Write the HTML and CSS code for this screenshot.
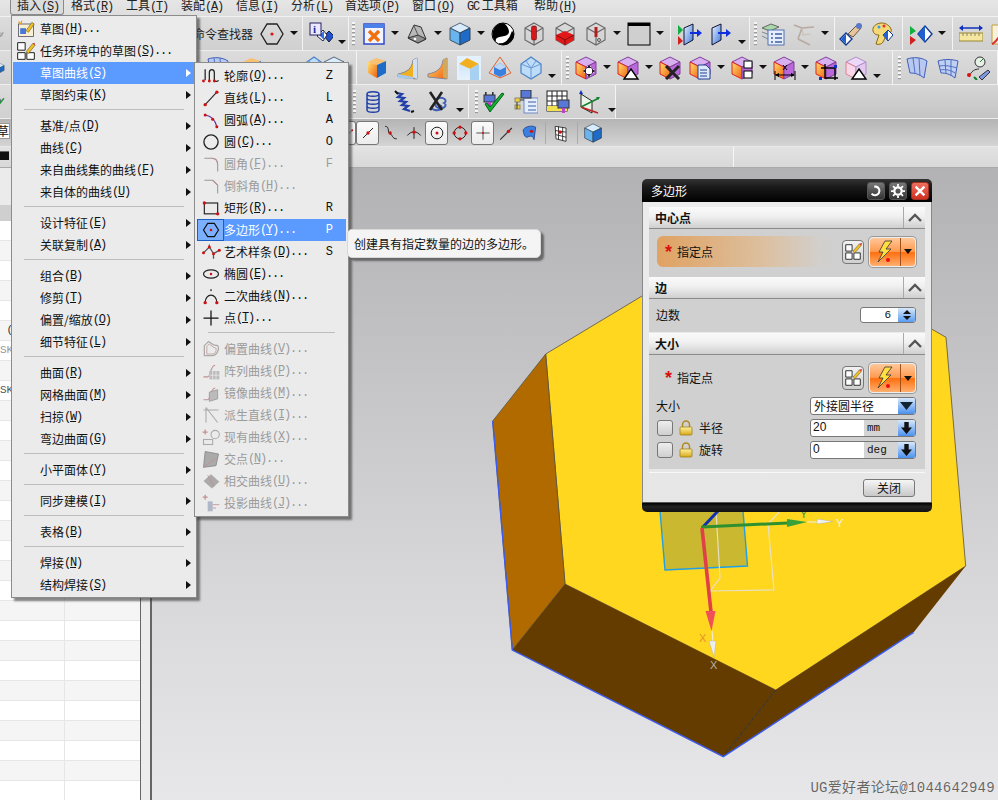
FILE: index.html
```html
<!DOCTYPE html>
<html lang="zh-CN">
<head>
<meta charset="utf-8">
<title>多边形</title>
<link rel="stylesheet" href="styles.css">
</head>
<body>
<svg class="defs" width="0" height="0" aria-hidden="true">
  <defs>
    <linearGradient id="gBlue" x1="0" y1="0" x2="1" y2="1"><stop offset="0" stop-color="#e8f2ff"/><stop offset="1" stop-color="#3f78d8"/></linearGradient>
    <linearGradient id="gOr" x1="0" y1="0" x2="1" y2="1"><stop offset="0" stop-color="#ffe070"/><stop offset="1" stop-color="#f06010"/></linearGradient>
    <linearGradient id="gSide" x1="0" y1="0" x2="0" y2="1"><stop offset="0" stop-color="#cfe6fa"/><stop offset="1" stop-color="#e8f2fb"/></linearGradient>
    <linearGradient id="gLock" x1="0" y1="0" x2="0" y2="1"><stop offset="0" stop-color="#fff2a0"/><stop offset="1" stop-color="#d8a818"/></linearGradient>
    <symbol id="chain" viewBox="0 0 24 24"><path d="M2 20L12 8M8 22l12-14" fill="none" stroke="#999" stroke-width="3"/><circle cx="14" cy="14" r="4" fill="none" stroke="#aaa" stroke-width="2"/></symbol>
    <symbol id="hexf" viewBox="0 0 24 24"><path d="M7 2h10l6 10-6 10H7L1 12z" fill="none" stroke="#222" stroke-width="1.3"/><circle cx="12" cy="12" r="1.6" fill="#e01010"/></symbol>
    <symbol id="info" viewBox="0 0 24 24"><path d="M15 14l5-5 5 5-5 6z" fill="#2050d0" stroke="#123"/><path d="M14 8l4 5-4 6-6-5z" fill="#fff" stroke="#224"/><path d="M10 13l5-4v9z" fill="#3a70e0"/><rect x="1" y="1" width="11" height="12" fill="#ece8ff" stroke="#222060"/><text x="4" y="11" class="svgt">i</text></symbol>
    <symbol id="win" viewBox="0 0 24 24"><rect x="2" y="2" width="20" height="20" fill="#f2f4ff" stroke="#3048c8" stroke-width="1.5"/><rect x="2" y="2" width="20" height="4" fill="#4a80e8"/><path d="M7 9l10 10M17 9L7 19" stroke="#f07010" stroke-width="3.4"/></symbol>
    <symbol id="part" viewBox="0 0 24 24"><path d="M3 16L9 3l7 2 5 12-8 4z" fill="#b8b8b8" stroke="#333"/><path d="M3 16l10 5 8-4-8-4z" fill="#8f8f8f" stroke="#333"/><circle cx="10" cy="17" r="1.3" fill="#fff"/><path d="M9 4l4 9" stroke="#555"/></symbol>
    <symbol id="cube" viewBox="0 0 24 24"><path d="M12 1l10 5-10 5L2 6z" fill="#d8ecfb" stroke="#567"/><path d="M2 6l10 5v12L2 18z" fill="#68b4ee" stroke="#456"/><path d="M22 6l-10 5v12l10-5z" fill="#1f6cc8" stroke="#345"/></symbol>
    <symbol id="yin" viewBox="0 0 24 24"><circle cx="12" cy="12" r="11" fill="#fff" stroke="#000"/><path d="M12 1a11 11 0 0 0-7 19c-2-8 12-3 13-10 0-4-3-8-6-9z" fill="#000"/><path d="M23 12c0 6-5 11-11 11-2 0-4-1-5-2 5 1 8-1 10-4 2-2 3-6 4-8 1 1 2 2 2 3z" fill="#000"/></symbol>
    <symbol id="wire" viewBox="0 0 24 24"><path d="M12 1l9 5v12l-9 5-9-5V6zM3 6l9 5 9-5M12 11v12" fill="none" stroke="#666" stroke-width="1.1"/></symbol>
    <symbol id="wcyl" viewBox="0 0 24 24"><use href="#wire"/><rect x="9.5" y="4" width="5" height="14" rx="1.5" fill="#d81818" stroke="#601010" stroke-width=".6"/></symbol>
    <symbol id="wfill" viewBox="0 0 24 24"><use href="#wire"/><path d="M3 13l9-4 9 4v5l-9 5-9-5z" fill="#e01818"/><path d="M3 13l9 5 9-5M12 18v5" stroke="#801010" fill="none"/></symbol>
    <symbol id="wneedle" viewBox="0 0 24 24"><use href="#wire"/><path d="M12 5v10" stroke="#b02020" stroke-width="3"/><circle cx="15" cy="18" r="1.5" fill="none" stroke="#555"/></symbol>
    <symbol id="frame" viewBox="0 0 24 24"><rect x="1" y="1" width="22" height="22" fill="#cfcfcf" stroke="#000"/><rect x="1" y="1" width="22" height="3" fill="#000"/></symbol>
    <symbol id="plane2" viewBox="0 0 24 24"><path d="M6 6l9-4v16l-9 5z" fill="url(#gBlue)" stroke="#113"/><path d="M12 11h10" stroke="#1030e0" stroke-width="2"/><path d="M19 7l5 4-5 4z" fill="#1030e0"/><path d="M0 3l5 5-5 5z" fill="#10b040"/><path d="M0 14l5 5-5 4z" fill="#d02020"/></symbol>
    <symbol id="plane1" viewBox="0 0 24 24"><path d="M3 6l9-4v16l-9 5z" fill="url(#gBlue)" stroke="#113"/><path d="M9 11h11" stroke="#1030e0" stroke-width="2"/><path d="M17 7l5 4-5 4z" fill="#1030e0"/></symbol>
    <symbol id="layers" viewBox="0 0 24 24"><path d="M1 6l9-4 8 3-9 4z" fill="#a8d8a8" stroke="#666"/><path d="M1 10l8 3 9-4M1 14l6 3" fill="none" stroke="#789"/><rect x="7" y="8" width="16" height="15" fill="#e4eefc" stroke="#5570b0"/><path d="M10 12h2M14 12h7M10 16h2M14 16h7M10 20h2M14 20h7" stroke="#4060a0" stroke-width="1.4"/></symbol>
    <symbol id="axes" viewBox="0 0 24 24"><path d="M6 17l4-11 12-1M6 17l12 6M10 6L2 3" fill="none" stroke="#b8aaa0" stroke-width="1.6"/><path d="M10 6l1 7M10 13l9-1" stroke="#c8c0b8" fill="none"/></symbol>
    <symbol id="hand" viewBox="0 0 24 24"><path d="M9 12l9-9 4 3-8 9z" fill="#e8c49a" stroke="#654"/><circle cx="20" cy="4" r="3" fill="#5878c8"/><path d="M1 17l6-6 6 6-6 6z" fill="#fff" stroke="#113a90" stroke-width="1.4"/><path d="M7 12v10l-5-5z" fill="#2060d0"/></symbol>
    <symbol id="palette" viewBox="0 0 24 24"><path d="M12 1C6 1 2 5 3 9c1 4 5 4 6 4l-3 9c3 1 6 0 7-2l3-6c4-2 6-4 5-7-1-3-5-6-9-6z" fill="#f5d878" stroke="#8a6a10"/><circle cx="9" cy="5" r="1.5" fill="#30a0e8"/><circle cx="14" cy="4" r="1.5" fill="#e83030"/><path d="M13 13l5-5 5 5-5 6z" fill="#fff" stroke="#113a90"/><path d="M18 8v11l-5-6z" fill="#2060d0"/></symbol>
    <symbol id="dia" viewBox="0 0 24 24"><path d="M9 12l7-8 7 8-7 8z" fill="#fff" stroke="#123a90" stroke-width="1.4"/><path d="M16 4v16l-7-8z" fill="#2060d0"/><path d="M1 4l6 5-6 4z" fill="#10b040"/><path d="M1 14l6 4-6 5z" fill="#d02020"/></symbol>
    <symbol id="ruler" viewBox="0 0 24 24"><rect x="0" y="11" width="24" height="8" fill="#f5e6a0" stroke="#998830"/><path d="M4 11v3M8 11v3M12 11v3M16 11v3M20 11v3" stroke="#886"/><path d="M1 6h22" stroke="#1030c0" stroke-width="1.5"/><path d="M0 6l4-3v6zM24 6l-4-3v6z" fill="#1030c0"/></symbol>
    <symbol id="graph" viewBox="0 0 24 24"><path d="M2 22V3l20 0v19z" fill="#f8f0d8" stroke="#c0a040"/><path d="M2 22C8 20 10 8 22 6" stroke="#d83030" fill="none" stroke-width="2"/></symbol>
    <symbol id="ocube" viewBox="0 0 24 24"><path d="M4 6l8-4 10 3-9 4z" fill="#f8c070"/><path d="M4 6l9 3v13l-9-5z" fill="url(#gOr)"/><path d="M22 5l-9 4v13l9-5z" fill="#1f6cc8"/></symbol>
    <symbol id="bend1" viewBox="0 0 24 24"><path d="M3 21L22 23V2l-4 2c-1 8-5 12-15 14z" fill="#f0b020" stroke="#889"/><path d="M18 4l4-2v21l-4-2z" fill="#cfe0f5"/><path d="M3 18l15 3v2L3 22z" fill="#a8c8ec"/></symbol>
    <symbol id="bend2" viewBox="0 0 24 24"><path d="M2 21L21 23V2l-4 2c-1 8-5 12-15 14z" fill="url(#gOr)" stroke="#889"/><path d="M17 4l4-2v21l-4-2z" fill="#d0a860"/></symbol>
    <symbol id="boxy" viewBox="0 0 24 24"><rect x="0" y="0" width="24" height="24" fill="#e4f2ff"/><path d="M2 8l8-6 12 6-9 5z" fill="#f2b020"/><path d="M2 8l11 5v11H2z" fill="url(#gSide)"/><path d="M22 8l-9 5v11h9z" fill="#a8d0f0"/></symbol>
    <symbol id="gemc" viewBox="0 0 24 24"><path d="M1 17L12 1l11 16-11 5z" fill="none" stroke="#e06030"/><path d="M12 7l6 4v7l-6 3-6-3v-7z" fill="#3a80e0"/><path d="M12 7l6 4-6 3-6-3z" fill="#bcd8f8"/></symbol>
    <symbol id="gem" viewBox="0 0 24 24"><path d="M12 1l10 7v9l-10 6L2 17V8z" fill="#bcdcf8" stroke="#4a80c8" stroke-width="1.2"/><path d="M7 5l5 7 5-7M2 8l10 4 10-4M12 12v11" fill="none" stroke="#6a9ad8"/></symbol>
    <symbol id="pcube" viewBox="0 0 24 24"><path d="M12 1l10 5-10 5L2 6z" fill="#d8b0f0" stroke="#804098"/><path d="M2 6l10 5v12L2 18z" fill="url(#gOr)" stroke="#e02020"/><path d="M22 6l-10 5v12l10-5z" fill="#b868d8" stroke="#804098"/></symbol>
    <symbol id="ov-move" viewBox="0 0 24 24"><path d="M15 10v10M10 15h10" stroke="#fff" stroke-width="4"/><path d="M15 9l2.5 3h-5zM15 21l2.5-3h-5zM9 15l3-2.500v5zM21 15l-3-2.500v5z" fill="#222"/></symbol>
    <symbol id="ov-tri" viewBox="0 0 24 24"><path d="M15 13l7 10H8z" fill="#fff" stroke="#000" stroke-width="1.4"/></symbol>
    <symbol id="ov-x" viewBox="0 0 24 24"><path d="M8 10l13 13M21 10L8 23" stroke="#222" stroke-width="3"/></symbol>
    <symbol id="ov-doc" viewBox="0 0 24 24"><path d="M10 9h8l4 4v10H10z" fill="#dde8fa" stroke="#204090"/><path d="M12 14h7M12 17h7M12 20h7" stroke="#204090"/></symbol>
    <symbol id="ov-two" viewBox="0 0 24 24"><rect x="14" y="5" width="8" height="7" fill="#fff" stroke="#000"/><rect x="14" y="15" width="8" height="7" fill="#fff" stroke="#000"/></symbol>
    <symbol id="ov-dim" viewBox="0 0 24 24"><path d="M3 15v9M23 15v9M4 19h18" stroke="#000"/><path d="M3 19l4-2v4zM23 19l-4-2v4z" fill="#000"/><path d="M11 9l4 5M15 9l-4 5" stroke="#000"/></symbol>
    <symbol id="ov-crop" viewBox="0 0 24 24"><path d="M11 8v14h13M7 12h14v12" fill="none" stroke="#000" stroke-width="1.4"/><rect x="5" y="21" width="3" height="3" fill="#1030c0"/><rect x="20" y="9" width="3" height="3" fill="#1030c0"/></symbol>
    <symbol id="pcubeghost" viewBox="0 0 24 24"><path d="M12 1l10 5-10 5L2 6z" fill="#ecd8f8" stroke="#b090c8"/><path d="M2 6l10 5v12L2 18z" fill="#f8d8e8" stroke="#e08090"/><path d="M22 6l-10 5v12l10-5z" fill="#e4c8f0" stroke="#b090c8"/></symbol>
    <symbol id="surf1" viewBox="0 0 24 24"><path d="M2 3c6-2 14-2 20 2l-3 17c-5-4-9-5-14-5z" fill="#b8c8f0" stroke="#4060b8"/><path d="M8 2l2 15M14 2l1 18" stroke="#5070c0" fill="none"/></symbol>
    <symbol id="surf2" viewBox="0 0 24 24"><path d="M2 5c6-2 14-2 20 0l-3 17c-5-4-9-5-14-5z" fill="#c0d0f4" stroke="#4060b8"/><path d="M9 4l1 14M15 4l0 16M3 10c6-1 12 0 18 2M4 14c6-1 10 0 15 3" stroke="#5070c0" fill="none"/></symbol>
    <symbol id="scan" viewBox="0 0 24 24"><circle cx="13" cy="6" r="5" fill="#e8f0e8" stroke="#333"/><path d="M13 6l3-3" stroke="#208030"/><path d="M2 21c2-6 6-8 10-8" fill="none" stroke="#333"/><circle cx="2" cy="19" r="2" fill="#e01010"/><path d="M12 21l9-7 2 2-8 8z" fill="#8098e0" stroke="#334"/><path d="M7 21l3 3" stroke="#108030" stroke-width="2"/></symbol>
    <symbol id="coil" viewBox="0 0 24 24"><path d="M6 4c0-3 12-3 12 0M6 4c0 3 12 3 12 0M6 8c0 3 12 3 12 0M6 12c0 3 12 3 12 0M6 16c0 3 12 3 12 0M6 20c0 3 12 3 12 0M6 4v16M18 4v16" fill="none" stroke="#2040a8" stroke-width="1.5"/></symbol>
    <symbol id="spring" viewBox="0 0 24 24"><path d="M5 3l5 1-4 3 6 1-4 3 6 1-4 3 6 1-4 3 6 2" fill="none" stroke="#2040a8" stroke-width="2.200"/><path d="M3 1l3 3M19 22l3-1" stroke="#111" stroke-width="2"/></symbol>
    <symbol id="nocoil" viewBox="0 0 24 24"><path d="M9 14a5 3 0 1 0 8-1a5 3 0 1 0 -8-1M5 16a5 3 0 1 0 8-1" fill="none" stroke="#4060b8" stroke-width="2"/><path d="M3 2l12 18M15 2L3 20" stroke="#222" stroke-width="2.600"/></symbol>
    <symbol id="plug" viewBox="0 0 24 24"><rect x="3" y="2" width="1.600" height="4" fill="#333"/><rect x="10" y="2" width="1.600" height="4" fill="#333"/><rect x="2" y="5" width="11" height="7" fill="#5878d8" stroke="#333"/><rect x="6" y="12" width="3" height="4" fill="#c040d0"/></symbol>
    <symbol id="check" viewBox="0 0 24 24"><use href="#plug"/><path d="M3 14l5 8L22 4l-2-1L8 17l-3-4z" fill="#10b030" stroke="#086018"/></symbol>
    <symbol id="tree" viewBox="0 0 24 24"><rect x="10" y="8" width="14" height="15" fill="#e4eefc" stroke="#7088c0"/><path d="M14 12h8M14 16h8M14 20h8" stroke="#4060a0"/><rect x="1" y="8" width="5" height="4" fill="#f0d040" stroke="#886"/><rect x="1" y="15" width="5" height="4" fill="#f0d040" stroke="#886"/><rect x="7" y="0" width="10" height="8" fill="#5878d8" stroke="#333"/><path d="M3 12v7M6 10h4" stroke="#333"/></symbol>
    <symbol id="table" viewBox="0 0 24 24"><rect x="1" y="1" width="20" height="20" fill="#fff" stroke="#222"/><path d="M1 6h20M1 11h20M1 16h20M6 1v20M11 1v20M16 1v20" stroke="#222"/><rect x="1" y="16" width="20" height="5" fill="#f0e050"/><rect x="12" y="10" width="11" height="8" fill="#5878d8" stroke="#333"/><rect x="16" y="18" width="3" height="5" fill="#c040d0"/></symbol>
    <symbol id="csys" viewBox="0 0 24 24"><path d="M3 4v13l11 6V11z" fill="#e8f4e8" stroke="#222"/><path d="M3 17l18-9" stroke="#108030" stroke-width="1.500"/><path d="M22 7l-4 0 2 3z" fill="#108030"/><path d="M3 17l17 6" stroke="#c02020" stroke-width="1.500"/><path d="M3 0l-2 4h4z" fill="#1030c0"/></symbol>
    <symbol id="s-line" viewBox="0 0 24 24"><path d="M6 18L18 6" stroke="#222" stroke-width="1.200"/><circle cx="12" cy="12" r="2" fill="#d01010"/></symbol>
    <symbol id="s-end" viewBox="0 0 24 24"><path d="M6 18L18 6" stroke="#222" stroke-width="1.200"/><circle cx="18" cy="6" r="2" fill="#d01010"/></symbol>
    <symbol id="s-wave" viewBox="0 0 24 24"><path d="M5 4c6 0 2 8 6 9 3 1 2 6 8 6" fill="none" stroke="#222" stroke-width="1.200"/><circle cx="11" cy="12" r="2" fill="#d01010"/></symbol>
    <symbol id="s-perp" viewBox="0 0 24 24"><path d="M4 15c5-6 11-6 16 0M12 5v14" fill="none" stroke="#222" stroke-width="1.200"/><circle cx="12" cy="11" r="2" fill="#d01010"/></symbol>
    <symbol id="s-center" viewBox="0 0 24 24"><circle cx="12" cy="12" r="7" fill="none" stroke="#222" stroke-width="1.200"/><circle cx="12" cy="12" r="1.800" fill="#d01010"/></symbol>
    <symbol id="s-quad" viewBox="0 0 24 24"><circle cx="12" cy="12" r="7" fill="none" stroke="#222" stroke-width="1.200"/><circle cx="12" cy="5" r="2" fill="#d01010"/><circle cx="5" cy="12" r="2" fill="#d01010"/><circle cx="19" cy="12" r="2" fill="#d01010"/><circle cx="12" cy="19" r="2" fill="#d01010"/></symbol>
    <symbol id="s-cross" viewBox="0 0 24 24"><path d="M12 4v16M4 12h16" stroke="#555" stroke-width="1.200"/><circle cx="12" cy="12" r="1.200" fill="#d01010"/></symbol>
    <symbol id="s-obl" viewBox="0 0 24 24"><path d="M5 20L19 6" stroke="#333" stroke-width="1.400"/><circle cx="15" cy="10" r="2" fill="#d01010"/></symbol>
    <symbol id="s-face" viewBox="0 0 24 24"><path d="M5 8c4-5 12-5 15-3l-2 15c-1-5-4-5-8-3-3 1-5-5-5-9z" fill="#3a80e0" stroke="#204090"/><circle cx="15" cy="10" r="2" fill="#d01010"/></symbol>
    <symbol id="s-grid" viewBox="0 0 24 24"><path d="M5 4l13 2v16L6 19z" fill="#fff" stroke="#222"/><path d="M5 9l13 2M6 14l12 3M9 4v16M14 5v16" stroke="#222"/><circle cx="11" cy="11" r="2" fill="#d01010"/></symbol>
    <symbol id="m-sk" viewBox="0 0 24 24"><rect x="3" y="6" width="18" height="15" fill="#f8f0d0" stroke="#556"/><path d="M5 11h7v7H5z" fill="#4a78d8"/><path d="M12 14l7-10 3 2-7 10z" fill="#f0c020" stroke="#444" stroke-width=".6"/><path d="M3 3l3 3M7 2l-1 4" stroke="#f0a010" stroke-width="1.400"/></symbol>
    <symbol id="m-task" viewBox="0 0 24 24"><path d="M2 2h9v9H2zM2 14h9v8H2zM13 14h9v8h-9z" fill="#fff" stroke="#222" stroke-width="1.200"/><path d="M12 13l8-10 3 2-8 10z" fill="#f0c020" stroke="#444" stroke-width=".6"/><path d="M20 3l3 2-1-3z" fill="#e02020"/></symbol>
    <symbol id="m-profile" viewBox="0 0 24 24"><path d="M5 4v13M5 17h0M10 17V8c0-5 6-5 6 0v9c0 2 4 2 5 0" fill="none" stroke="#222" stroke-width="1.500"/><circle cx="3" cy="18" r="1.700" fill="#d01010"/><circle cx="10" cy="18" r="1.700" fill="#d01010"/><circle cx="16" cy="18" r="1.700" fill="#d01010"/></symbol>
    <symbol id="m-line" viewBox="0 0 24 24"><path d="M5 20L19 5" stroke="#222" stroke-width="1.300"/><circle cx="5" cy="20" r="2" fill="#d01010"/><circle cx="19" cy="5" r="2" fill="#d01010"/></symbol>
    <symbol id="m-arc" viewBox="0 0 24 24"><path d="M5 6c7 1 12 6 14 14" fill="none" stroke="#6030a0" stroke-width="1.500"/><circle cx="5" cy="6" r="1.800" fill="#d01010"/><circle cx="14" cy="11" r="1.800" fill="#d01010"/><circle cx="19" cy="20" r="1.800" fill="#d01010"/></symbol>
    <symbol id="m-circle" viewBox="0 0 24 24"><circle cx="12" cy="12" r="8.500" fill="none" stroke="#222" stroke-width="1.600"/></symbol>
    <symbol id="m-fillet" viewBox="0 0 24 24"><path d="M4 5h9c5 0 7 3 7 8v8" fill="none" stroke="#999" stroke-width="1.300"/><path d="M13 5c5 0 7 3 7 8" fill="none" stroke="#c09090" stroke-width="1.300"/></symbol>
    <symbol id="m-chamfer" viewBox="0 0 24 24"><path d="M4 5h10l6 6v10" fill="none" stroke="#999" stroke-width="1.300"/><path d="M14 5l6 6" stroke="#c09090" stroke-width="1.300"/></symbol>
    <symbol id="m-rect" viewBox="0 0 24 24"><rect x="4" y="6" width="16" height="13" fill="none" stroke="#222" stroke-width="1.400"/><circle cx="4" cy="6" r="2" fill="#d01010"/><circle cx="20" cy="19" r="2" fill="#d01010"/></symbol>
    <symbol id="m-poly" viewBox="0 0 24 24"><path d="M8 4h8l5 8-5 8H8l-5-8z" fill="none" stroke="#111" stroke-width="1.400"/><circle cx="12" cy="12" r="1.600" fill="#d01010"/></symbol>
    <symbol id="m-spline" viewBox="0 0 24 24"><path d="M3 13l7-7 5 8 7-4M10 6v-3M15 14v6" fill="none" stroke="#555" stroke-width="1.500"/><circle cx="3" cy="13" r="1.800" fill="#d01010"/><circle cx="10" cy="6" r="1.800" fill="#d01010"/><circle cx="15" cy="14" r="1.800" fill="#d01010"/><circle cx="22" cy="10" r="1.800" fill="#d01010"/></symbol>
    <symbol id="m-ellipse" viewBox="0 0 24 24"><ellipse cx="12" cy="12" rx="9" ry="5" fill="none" stroke="#222" stroke-width="1.400"/><circle cx="12" cy="12" r="1.500" fill="#d01010"/></symbol>
    <symbol id="m-conic" viewBox="0 0 24 24"><path d="M5 20c0-12 14-12 14 0" fill="none" stroke="#222" stroke-width="1.500"/><circle cx="5" cy="20" r="2" fill="#d01010"/><circle cx="19" cy="20" r="2" fill="#d01010"/><circle cx="12" cy="5" r="1.300" fill="#666"/></symbol>
    <symbol id="m-point" viewBox="0 0 24 24"><path d="M12 3v18M3 12h18" stroke="#111" stroke-width="1.500"/></symbol>
    <symbol id="d-offset" viewBox="0 0 24 24"><path d="M4 20V8l5-5 6 4 5 1c3 5-2 12-6 12z" fill="none" stroke="#aaa" stroke-width="1.500"/><path d="M7 18V9l3-3 5 4 3 1c1 3-1 7-4 7z" fill="none" stroke="#c8a8a8" stroke-width="1.200"/></symbol>
    <symbol id="d-pattern" viewBox="0 0 24 24"><path d="M3 19h5c4 0 3-14 9-14" fill="none" stroke="#c09090" stroke-width="1.300"/><rect x="10" y="12" width="12" height="10" fill="#bbb"/><path d="M14 12v10M18 12v10M10 17h12" stroke="#e8e8e8"/></symbol>
    <symbol id="d-mirror" viewBox="0 0 24 24"><path d="M3 20h5c4 0 3-14 9-14" fill="none" stroke="#c09090" stroke-width="1.300"/><path d="M10 11l10-3v11l-10 3z" fill="#bbb" stroke="#999"/></symbol>
    <symbol id="d-derived" viewBox="0 0 24 24"><path d="M3 6h18M6 3l14 18M6 3v18" stroke="#aaa" stroke-width="1.300"/></symbol>
    <symbol id="d-exist" viewBox="0 0 24 24"><path d="M5 3v6M2 6h6" stroke="#c09090" stroke-width="1.500"/><circle cx="17" cy="9" r="5" fill="none" stroke="#aaa" stroke-width="1.300"/><rect x="3" y="15" width="11" height="6" fill="none" stroke="#aaa" stroke-width="1.300"/></symbol>
    <symbol id="d-inter" viewBox="0 0 24 24"><path d="M5 3l16 3-3 14-15 2z" fill="#aaa" stroke="#888"/><path d="M3 22l14-10" stroke="#c09090"/></symbol>
    <symbol id="d-curve" viewBox="0 0 24 24"><path d="M3 12l9-8 10 9-9 8z" fill="#aaa"/><path d="M8 5l8 14" stroke="#c09090"/></symbol>
    <symbol id="d-proj" viewBox="0 0 24 24"><path d="M5 2v6M2 5h6" stroke="#c09090" stroke-width="1.500"/><path d="M8 10h6v12H8z" fill="#b0b8c8"/><path d="M14 14h8M14 18h4" stroke="#c09090"/></symbol>
    <symbol id="sketchbtn" viewBox="0 0 22 22"><path d="M3 3h7v7H3zM3 12h7v7H3zM12 12h7v7h-7z" fill="#fff" stroke="#222"/><path d="M11 10l7-8 2 2-7 8z" fill="#f0c020" stroke="#444" stroke-width=".5"/><path d="M18 2l2 2 1-3z" fill="#e02020"/></symbol>
    <symbol id="bolt" viewBox="0 0 24 24"><path d="M12 1h7l-6 8h5L5 22l5-10H6z" fill="#ffe040" stroke="#333" stroke-width=".8"/><circle cx="15" cy="20" r="2" fill="#e81010"/></symbol>
    <symbol id="lock" viewBox="0 0 14 16"><path d="M3.500 7V4.500a3.500 3.500 0 0 1 7 0V7" fill="none" stroke="#b08a20" stroke-width="1.500"/><rect x="1" y="7" width="12" height="8" rx="1" fill="url(#gLock)" stroke="#a08018" stroke-width=".8"/></symbol>
    <symbol id="chev" viewBox="0 0 14 10"><path d="M1 8l6-6 6 6" fill="none" stroke="#555" stroke-width="2.400"/></symbol>
  </defs>
</svg>

<div class="app">
  <nav class="menubar">
    <span class="mb on">插入<span class="k">(<u>S</u>)</span></span>
    <span class="mb">格式<span class="k">(<u>R</u>)</span></span>
    <span class="mb">工具<span class="k">(<u>T</u>)</span></span>
    <span class="mb">装配<span class="k">(<u>A</u>)</span></span>
    <span class="mb">信息<span class="k">(<u>I</u>)</span></span>
    <span class="mb">分析<span class="k">(<u>L</u>)</span></span>
    <span class="mb wide">首选项<span class="k">(<u>P</u>)</span></span>
    <span class="mb">窗口<span class="k">(<u>O</u>)</span></span>
    <span class="mb wide"><span class="k">GC</span> 工具箱</span>
    <span class="mb">帮助<span class="k">(<u>H</u>)</span></span>
  </nav>

  <div class="tb r1">
    <div class="grp ga">
      <i class="b lead"><svg class="ic"><use href="#chain"/></svg></i>
      <span class="finder">命令查找器</span>
      <i class="hexb"><svg class="ic"><use href="#hexf"/></svg></i><i class="a"></i>
    </div>
    <div class="grp gb"><i class="b"><svg class="ic"><use href="#info"/></svg></i><i class="a low"></i></div>
    <div class="grp gc"><i class="grip"></i>
      <i class="b"><svg class="ic"><use href="#win"/></svg></i><i class="a"></i>
      <i class="b"><svg class="ic"><use href="#part"/></svg></i><i class="a"></i>
      <i class="b"><svg class="ic"><use href="#cube"/></svg></i><i class="a"></i>
      <i class="b"><svg class="ic"><use href="#yin"/></svg></i>
      <i class="b"><svg class="ic"><use href="#wcyl"/></svg></i>
      <i class="b"><svg class="ic"><use href="#wfill"/></svg></i>
      <i class="b"><svg class="ic"><use href="#wneedle"/></svg></i><i class="a"></i>
      <i class="b"><svg class="ic"><use href="#frame"/></svg></i><i class="a"></i>
    </div>
    <div class="grp gd">
      <i class="b"><svg class="ic"><use href="#plane2"/></svg></i>
      <i class="b"><svg class="ic"><use href="#plane1"/></svg></i><i class="a low"></i>
    </div>
    <div class="grp ge"><i class="grip"></i>
      <i class="b"><svg class="ic"><use href="#layers"/></svg></i>
      <i class="b"><svg class="ic"><use href="#axes"/></svg></i><i class="a"></i>
    </div>
    <div class="grp gf">
      <i class="b"><svg class="ic"><use href="#hand"/></svg></i>
      <i class="b"><svg class="ic"><use href="#palette"/></svg></i>
    </div>
    <div class="grp gg"><i class="b"><svg class="ic"><use href="#dia"/></svg></i><i class="a"></i></div>
    <div class="grp gh">
      <i class="b"><svg class="ic"><use href="#ruler"/></svg></i>
      <i class="b"><svg class="ic"><use href="#graph"/></svg></i>
    </div>
  </div>

  <div class="tb r2">
    <div class="grp ra">
      <i class="b lead"><svg class="ic"><use href="#cube"/></svg></i>
      <i class="b peek1"><svg class="ic"><use href="#surf1"/></svg></i>
      <i class="b peek2"><svg class="ic"><use href="#ocube"/></svg></i>
      <i class="b peek3"><svg class="ic"><use href="#gem"/></svg></i>
      <i class="b peek4"><svg class="ic"><use href="#cube"/></svg></i>
    </div>
    <div class="grp rb">
      <i class="b"><svg class="ic"><use href="#ocube"/></svg></i>
      <i class="b"><svg class="ic"><use href="#bend1"/></svg></i>
      <i class="b"><svg class="ic"><use href="#bend2"/></svg></i>
      <i class="b"><svg class="ic"><use href="#boxy"/></svg></i>
      <i class="b"><svg class="ic"><use href="#gemc"/></svg></i>
      <i class="b"><svg class="ic"><use href="#gem"/></svg></i><i class="a low"></i>
    </div>
    <div class="grp rc"><i class="grip"></i>
      <i class="b"><svg class="ic"><use href="#pcube"/><use href="#ov-move"/></svg></i><i class="a"></i>
      <i class="b"><svg class="ic"><use href="#pcube"/><use href="#ov-tri"/></svg></i><i class="a"></i>
      <i class="b"><svg class="ic"><use href="#pcube"/><use href="#ov-x"/></svg></i>
      <i class="b"><svg class="ic"><use href="#pcube"/><use href="#ov-doc"/></svg></i><i class="a"></i>
      <i class="b"><svg class="ic"><use href="#pcube"/><use href="#ov-two"/></svg></i><i class="a"></i>
      <i class="b"><svg class="ic"><use href="#pcube"/><use href="#ov-dim"/></svg></i><i class="a"></i>
      <i class="b"><svg class="ic"><use href="#pcube"/><use href="#ov-crop"/></svg></i>
      <i class="b"><svg class="ic"><use href="#pcubeghost"/><use href="#ov-tri"/></svg></i><i class="a low"></i>
    </div>
    <div class="grp rd"><i class="grip"></i>
      <i class="b"><svg class="ic"><use href="#surf1"/></svg></i>
      <i class="b"><svg class="ic"><use href="#surf2"/></svg></i>
      <i class="b"><svg class="ic"><use href="#scan"/></svg></i>
    </div>
  </div>

  <div class="tb r3">
    <div class="grp t1"><i class="b lead"><svg class="ic"><use href="#check"/></svg></i></div>
    <div class="grp t2"><i class="grip"></i>
      <i class="b"><svg class="ic"><use href="#coil"/></svg></i>
      <i class="b"><svg class="ic"><use href="#spring"/></svg></i>
      <i class="b nudge"><svg class="ic"><use href="#nocoil"/></svg></i><i class="a low"></i>
    </div>
    <div class="grp t3"><i class="grip"></i>
      <i class="b"><svg class="ic"><use href="#check"/></svg></i>
      <i class="b"><svg class="ic"><use href="#tree"/></svg></i>
      <i class="b"><svg class="ic"><use href="#table"/></svg></i>
      <i class="b"><svg class="ic"><use href="#csys"/></svg></i><i class="a low"></i>
    </div>
  </div>

  <div class="tb r4">
    <span class="combo">草图</span>
    <div class="snaps">
      <i class="s on"><svg class="ic20"><use href="#s-end"/></svg></i>
      <i class="s on"><svg class="ic20"><use href="#s-line"/></svg></i>
      <i class="s"><svg class="ic20"><use href="#s-wave"/></svg></i>
      <i class="s"><svg class="ic20"><use href="#s-perp"/></svg></i>
      <i class="s on"><svg class="ic20"><use href="#s-center"/></svg></i>
      <i class="s"><svg class="ic20"><use href="#s-quad"/></svg></i>
      <i class="s on"><svg class="ic20"><use href="#s-cross"/></svg></i>
      <i class="s"><svg class="ic20"><use href="#s-obl"/></svg></i>
      <i class="s"><svg class="ic20"><use href="#s-face"/></svg></i>
      <i class="vs"></i>
      <i class="s"><svg class="ic20"><use href="#s-grid"/></svg></i>
      <i class="vs"></i>
      <i class="s"><svg class="ic20"><use href="#cube"/></svg></i>
    </div>
  </div>

  <div class="tb r5"><i class="handle"></i><span class="cut"></span></div>

  <main class="work">
    <aside class="side">
      <div class="side-top"></div>
      <div class="side-head"></div>
      <div class="rows">
        <div class="row"><b></b><b></b></div><div class="row"><b></b><b></b></div>
        <div class="row"><b></b><b></b></div><div class="row"><b></b><b></b></div>
        <div class="row"><b></b><b></b></div><div class="row"><b>&nbsp;(</b><b></b></div>
        <div class="row"><b class="mut">SK</b><b></b></div><div class="row"><b></b><b></b></div>
        <div class="row"><b class="dk">SK</b><b></b></div><div class="row"><b></b><b></b></div>
        <div class="row"><b></b><b></b></div><div class="row"><b></b><b></b></div>
        <div class="row"><b></b><b></b></div><div class="row"><b></b><b></b></div>
        <div class="row"><b></b><b></b></div><div class="row"><b></b><b></b></div>
        <div class="row"><b></b><b></b></div><div class="row"><b></b><b></b></div>
        <div class="row"><b></b><b></b></div><div class="row"><b></b><b></b></div>
        <div class="row"><b></b><b></b></div><div class="row"><b></b><b></b></div>
        <div class="row"><b></b><b></b></div><div class="row"><b></b><b></b></div>
        <div class="row"><b></b><b></b></div><div class="row"><b></b><b></b></div>
        <div class="row"><b></b><b></b></div><div class="row"><b></b><b></b></div>
        <div class="row"><b></b><b></b></div>
      </div>
    </aside>
    <div class="strip"></div>
    <section class="view">
      <svg class="model" viewBox="152 168 846 632" width="846" height="632">
        <polygon points="545.700,354 755,228 946,337.300 965.700,566 775.700,690 565,584" fill="#ffd71f" stroke="#5a5040" stroke-width=".8"/>
        <polygon points="545.700,354 565,584 512.300,650 492.700,421" fill="#b06a00" stroke="#554" stroke-width=".8"/>
        <polygon points="565,584 775.700,690 723.300,756.700 512.300,650" fill="#643c00"/>
        <polygon points="775.700,690 965.700,566 913.300,632.700 723.300,756.700" fill="#643c00"/>
        <path d="M775.700 690L723.300 756.700" stroke="#333" stroke-width="1"/>
        <path d="M492.700 421L512.300 650L723.300 756.700L913.300 632.700" fill="none" stroke="#3a5cf0" stroke-width="1.400"/>
        <polygon points="660,511 743,511 747.500,566 665,570" fill="#c9b830" stroke="#1e9fe8" stroke-width="1.400"/>
        <path d="M716 511l4 67-10 13 64-1-6-66 12-13" fill="none" stroke="#e8e0c0" stroke-width="1.200"/>
        <path d="M702 528L718 511" stroke="#1030b0" stroke-width="3"/>
        <path d="M702 527L788 523" stroke="#2f9030" stroke-width="3"/>
        <polygon points="787,519 807,522 787,527" fill="#3aa03a"/>
        <path d="M807 522L818 522" stroke="#eee"/>
        <polygon points="817,519 833,521.500 817,524" fill="#f2f2f2" stroke="#aaa" stroke-width=".4"/>
        <path d="M702 528L711 612" stroke="#e04048" stroke-width="3.600"/>
        <polygon points="705.500,611 715.500,611 711.500,631" fill="#f05058"/>
        <path d="M712 631L713 642" stroke="#eee"/>
        <polygon points="709,641 716,641 714,657" fill="#eee" stroke="#aaa" stroke-width=".4"/>
        <text x="800" y="518" class="ax green">Y</text>
        <text x="836" y="527" class="ax white">Y</text>
        <text x="699" y="642" class="ax orange">X</text>
        <text x="710" y="669" class="ax gray">X</text>
      </svg>
      <p class="mark">UG爱好者论坛@1044642949</p>
    </section>
  </main>
</div>

<div class="menu m1">
  <div class="mi"><span class="mic"><svg class="ic20"><use href="#m-sk"/></svg></span>草图<span class="k">(<u>H</u>)...</span></div>
  <div class="mi"><span class="mic"><svg class="ic20"><use href="#m-task"/></svg></span>任务环境中的草图<span class="k">(<u>S</u>)...</span></div>
  <div class="mi hot"><span class="mic"></span>草图曲线<span class="k">(<u>S</u>)</span><i class="tri"></i></div>
  <div class="mi"><span class="mic"></span>草图约束<span class="k">(<u>K</u>)</span><i class="tri"></i></div>
  <div class="sep"></div>
  <div class="mi"><span class="mic"></span>基准/点<span class="k">(<u>D</u>)</span><i class="tri"></i></div>
  <div class="mi"><span class="mic"></span>曲线<span class="k">(<u>C</u>)</span><i class="tri"></i></div>
  <div class="mi"><span class="mic"></span>来自曲线集的曲线<span class="k">(<u>F</u>)</span><i class="tri"></i></div>
  <div class="mi"><span class="mic"></span>来自体的曲线<span class="k">(<u>U</u>)</span><i class="tri"></i></div>
  <div class="sep"></div>
  <div class="mi"><span class="mic"></span>设计特征<span class="k">(<u>E</u>)</span><i class="tri"></i></div>
  <div class="mi"><span class="mic"></span>关联复制<span class="k">(<u>A</u>)</span><i class="tri"></i></div>
  <div class="sep"></div>
  <div class="mi"><span class="mic"></span>组合<span class="k">(<u>B</u>)</span><i class="tri"></i></div>
  <div class="mi"><span class="mic"></span>修剪<span class="k">(<u>T</u>)</span><i class="tri"></i></div>
  <div class="mi"><span class="mic"></span>偏置/缩放<span class="k">(<u>O</u>)</span><i class="tri"></i></div>
  <div class="mi"><span class="mic"></span>细节特征<span class="k">(<u>L</u>)</span><i class="tri"></i></div>
  <div class="sep"></div>
  <div class="mi"><span class="mic"></span>曲面<span class="k">(<u>R</u>)</span><i class="tri"></i></div>
  <div class="mi"><span class="mic"></span>网格曲面<span class="k">(<u>M</u>)</span><i class="tri"></i></div>
  <div class="mi"><span class="mic"></span>扫掠<span class="k">(<u>W</u>)</span><i class="tri"></i></div>
  <div class="mi"><span class="mic"></span>弯边曲面<span class="k">(<u>G</u>)</span><i class="tri"></i></div>
  <div class="sep"></div>
  <div class="mi"><span class="mic"></span>小平面体<span class="k">(<u>Y</u>)</span><i class="tri"></i></div>
  <div class="sep"></div>
  <div class="mi"><span class="mic"></span>同步建模<span class="k">(<u>I</u>)</span><i class="tri"></i></div>
  <div class="sep"></div>
  <div class="mi"><span class="mic"></span>表格<span class="k">(<u>B</u>)</span><i class="tri"></i></div>
  <div class="sep"></div>
  <div class="mi"><span class="mic"></span>焊接<span class="k">(<u>N</u>)</span><i class="tri"></i></div>
  <div class="mi"><span class="mic"></span>结构焊接<span class="k">(<u>S</u>)</span><i class="tri"></i></div>
</div>

<div class="menu m2">
  <div class="mi"><span class="mic"><svg class="ic20"><use href="#m-profile"/></svg></span>轮廓<span class="k">(<u>O</u>)...</span><span class="key">Z</span></div>
  <div class="mi"><span class="mic"><svg class="ic20"><use href="#m-line"/></svg></span>直线<span class="k">(<u>L</u>)...</span><span class="key">L</span></div>
  <div class="mi"><span class="mic"><svg class="ic20"><use href="#m-arc"/></svg></span>圆弧<span class="k">(<u>A</u>)...</span><span class="key">A</span></div>
  <div class="mi"><span class="mic"><svg class="ic20"><use href="#m-circle"/></svg></span>圆<span class="k">(<u>C</u>)...</span><span class="key">O</span></div>
  <div class="mi off"><span class="mic"><svg class="ic20"><use href="#m-fillet"/></svg></span>圆角<span class="k">(<u>F</u>)...</span><span class="key">F</span></div>
  <div class="mi off"><span class="mic"><svg class="ic20"><use href="#m-chamfer"/></svg></span>倒斜角<span class="k">(<u>H</u>)...</span></div>
  <div class="mi"><span class="mic"><svg class="ic20"><use href="#m-rect"/></svg></span>矩形<span class="k">(<u>R</u>)...</span><span class="key">R</span></div>
  <div class="mi hot"><span class="mic boxed"><svg class="ic20"><use href="#m-poly"/></svg></span>多边形<span class="k">(<u>Y</u>)...</span><span class="key">P</span></div>
  <div class="mi"><span class="mic"><svg class="ic20"><use href="#m-spline"/></svg></span>艺术样条<span class="k">(<u>D</u>)...</span><span class="key">S</span></div>
  <div class="mi"><span class="mic"><svg class="ic20"><use href="#m-ellipse"/></svg></span>椭圆<span class="k">(<u>E</u>)...</span></div>
  <div class="mi"><span class="mic"><svg class="ic20"><use href="#m-conic"/></svg></span>二次曲线<span class="k">(<u>N</u>)...</span></div>
  <div class="mi"><span class="mic"><svg class="ic20"><use href="#m-point"/></svg></span>点<span class="k">(<u>T</u>)...</span></div>
  <div class="sep"></div>
  <div class="mi off"><span class="mic"><svg class="ic20"><use href="#d-offset"/></svg></span>偏置曲线<span class="k">(<u>V</u>)...</span></div>
  <div class="mi off"><span class="mic"><svg class="ic20"><use href="#d-pattern"/></svg></span>阵列曲线<span class="k">(<u>P</u>)...</span></div>
  <div class="mi off"><span class="mic"><svg class="ic20"><use href="#d-mirror"/></svg></span>镜像曲线<span class="k">(<u>M</u>)...</span></div>
  <div class="mi off"><span class="mic"><svg class="ic20"><use href="#d-derived"/></svg></span>派生直线<span class="k">(<u>I</u>)...</span></div>
  <div class="mi off"><span class="mic"><svg class="ic20"><use href="#d-exist"/></svg></span>现有曲线<span class="k">(<u>X</u>)...</span></div>
  <div class="mi off"><span class="mic"><svg class="ic20"><use href="#d-inter"/></svg></span>交点<span class="k">(<u>N</u>)...</span></div>
  <div class="mi off"><span class="mic"><svg class="ic20"><use href="#d-curve"/></svg></span>相交曲线<span class="k">(<u>U</u>)...</span></div>
  <div class="mi off"><span class="mic"><svg class="ic20"><use href="#d-proj"/></svg></span>投影曲线<span class="k">(<u>J</u>)...</span></div>
</div>

<div class="tip">创建具有指定数量的边的多边形。</div>

<div class="dlg">
  <header class="dlg-title">
    <span class="dlg-name">多边形</span>
    <span class="tbtn"><svg viewBox="0 0 16 16" class="ic14"><path d="M6 3h2a5 5 0 1 1-5 8" fill="none" stroke="#fff" stroke-width="2.400"/></svg></span>
    <span class="tbtn"><svg viewBox="0 0 16 16" class="ic14"><circle cx="8" cy="8" r="4.200" fill="none" stroke="#fff" stroke-width="2.600"/><path d="M8 0v3M8 13v3M0 8h3M13 8h3M2.300 2.300l2 2M11.700 11.700l2 2M13.700 2.300l-2 2M4.300 11.700l-2 2" stroke="#fff" stroke-width="2"/></svg></span>
    <span class="tbtn close"><svg viewBox="0 0 16 16" class="ic14"><path d="M3 3l10 10M13 3L3 13" stroke="#fff" stroke-width="2.800"/></svg></span>
  </header>
  <div class="dlg-body">
    <div class="sec"><h3>中心点</h3><span class="col"><svg class="chev"><use href="#chev"/></svg></span></div>
    <div class="cn c1">
      <div class="pill"><em>*</em>指定点</div>
      <span class="sqb"><svg class="ic20"><use href="#sketchbtn"/></svg></span>
      <span class="orb"><span class="orm"><svg class="ic24"><use href="#bolt"/></svg></span><span class="ord"><i></i></span></span>
    </div>
    <div class="sec"><h3>边</h3><span class="col"><svg class="chev"><use href="#chev"/></svg></span></div>
    <div class="cn c2">
      <span class="lab">边数</span>
      <span class="spin"><span class="val">6</span><span class="sb"><i class="up"></i><i class="dn"></i></span></span>
    </div>
    <div class="sec gap"><h3>大小</h3><span class="col"><svg class="chev"><use href="#chev"/></svg></span></div>
    <div class="cn c3">
      <div class="line pt">
        <div class="pill plain"><em>*</em>指定点</div>
        <span class="sqb"><svg class="ic20"><use href="#sketchbtn"/></svg></span>
        <span class="orb"><span class="orm"><svg class="ic24"><use href="#bolt"/></svg></span><span class="ord"><i></i></span></span>
      </div>
      <div class="line"><span class="lab">大小</span>
        <span class="fld"><span class="dd">外接圆半径</span><span class="bb"><i class="cv"></i></span></span>
      </div>
      <div class="line"><span class="cb"></span><svg class="lk"><use href="#lock"/></svg><span class="lab2">半径</span>
        <span class="fld"><span class="inp">20</span><span class="unit">mm</span><span class="bb"><i class="da"></i></span></span>
      </div>
      <div class="line"><span class="cb"></span><svg class="lk"><use href="#lock"/></svg><span class="lab2">旋转</span>
        <span class="fld"><span class="inp">0</span><span class="unit">deg</span><span class="bb"><i class="da"></i></span></span>
      </div>
    </div>
    <div class="foot"><button class="closebtn" type="button">关闭</button></div>
  </div>
  <div class="dlg-end"></div>
</div>
</body>
</html>
```
FILE: styles.css
```css
*{box-sizing:border-box}
html,body{margin:0;padding:0;width:998px;height:800px;overflow:hidden}
body{position:relative;font:12px/1 "Noto Sans CJK SC","Liberation Sans",sans-serif;color:#111;background:#ddd}
.defs{position:absolute}
u{text-decoration:underline}
.k{font:12px/1 "Liberation Mono","Noto Sans CJK SC",monospace;letter-spacing:-1.2px}
.svgt{font:bold 11px "Liberation Serif",serif;fill:#1030a0}
.app{display:flex;flex-direction:column;width:998px;height:800px}

/* menu bar */
.menubar{height:17px;display:flex;align-items:flex-start;padding-left:10px;background:linear-gradient(#e6e6e6,#dedede);border-bottom:1px solid #f2f2f2;overflow:hidden;flex:none}
.mb{width:55px;height:15px;padding-left:7px;line-height:10px;white-space:nowrap;flex:none;color:#222}
.mb.wide{width:67px}
.mb.on{width:54px;background:#dcdcdc;border:1px solid #8a8a8a;border-top:0;border-radius:0 0 3px 3px;padding-left:6px}
.mb:nth-child(6){width:54px}

/* toolbars */
.tb{display:flex;flex:none;overflow:hidden;background:linear-gradient(#d6d6d6,#c4c4c4);border-bottom:1px solid #eee}
.r1,.r2,.r3{height:34px}
.r4{height:28px;background:linear-gradient(#b4b4b4,#d4d4d4);align-items:center;border-bottom:1px solid #e8e8e8}
.r5{height:21px;background:linear-gradient(#e2e2e2,#d8d8d8);border-bottom:1px solid #aaa;position:relative}
.grp{display:flex;align-items:center;height:100%;flex:none;background:linear-gradient(#dcdcdc,#d0d0d0);border-right:1px solid #f4f4f4}
.b{width:31px;height:24px;display:flex;justify-content:center;flex:none}
.ic{width:24px;height:24px;display:block}
.ic20{width:20px;height:20px;display:block}
.ic24{width:24px;height:24px;display:block}
.ic14{width:14px;height:14px;display:block}
.a{width:12px;height:24px;flex:none;position:relative}
.a::after{content:"";position:absolute;left:2px;top:9px;border:4px solid transparent;border-top:4px solid #111;border-bottom:0}
.a.low::after{top:18px}
.grip{width:3px;height:24px;flex:none;background:repeating-linear-gradient(#f6f6f6 0 2px,#9a9a9a 2px 3px,#c8c8c8 3px 4px)}
.lead{width:10px;margin-left:-5px;justify-content:flex-start;overflow:hidden}

.ga{width:303px;padding-left:0}
.finder{font-size:12px;margin-left:188px;width:60px;white-space:nowrap;flex:none;color:#222;line-height:18px}
.hexb{width:24px;height:24px;margin-left:7px;flex:none}
.ga .a{margin-left:4px}
.gb{width:46px;padding-left:2px}
.gc{width:322px;padding-left:3px}
.gc .grip{margin-right:3px}
.gd{width:79px;padding-left:3px}
.ge{width:85px;padding-left:4px}
.gf{width:68px;padding-left:0}
.gg{width:50px;padding-left:2px}
.gh{width:60px;padding-left:2px}

.ra{width:357px}
.peek1{margin-left:197px}
.peek2{margin-left:2px}
.peek3{margin-left:32px}
.peek4{margin-left:-11px}
.rb{width:205px;padding-left:3px}
.rc{width:331px;padding-left:4px}
.rc .grip{margin-right:2px}
.rc .b{width:30px}
.rd{width:105px;padding-left:5px}

.t1{width:349px}
.t2{width:120px;padding-left:4px}
.t2 .grip{margin-right:1px}
.nudge{margin-left:4px}
.t3{width:147px;padding-left:6px}
.t3 .b{width:32px}

.combo{width:10px;height:16px;margin-top:-3px;background:#fff;border:1px solid #999;border-left:0;overflow:hidden;white-space:nowrap;text-indent:-3px;line-height:14px;flex:none}
.snaps{display:flex;align-items:center;margin-left:334px}
.s{width:23px;height:24px;display:flex;align-items:center;justify-content:center;flex:none}
.s.on{background:linear-gradient(#fafafa,#ececec);border:1px solid #777;border-radius:3px}
.vs{width:1px;height:22px;margin:0 3px 0 5px;background:#f4f4f4;border-right:1px solid #aaa;flex:none}
.snaps .s:first-child{width:12px;justify-content:flex-end;border-left:0}
.handle{position:absolute;left:0;top:5px;width:9px;height:8px;background:#111;box-shadow:0 -1px #666}
.cut{position:absolute;left:733px;top:0;width:1px;height:100%;background:#f6f6f6}

/* workspace */
.work{flex:1;display:flex;min-height:0}
.side{width:140px;display:flex;flex-direction:column;background:#fff;overflow:hidden;flex:none}
.side-top{height:37px;background:#ebebeb;flex:none}
.side-head{height:16px;background:#cfcfcf;flex:none}
.rows{flex:1}
.row{height:20px;display:flex;border-bottom:1px solid #e6e6e6;background:#fff}
.row:nth-child(even){background:#f5f5f5}
.row b{width:65px;height:19px;border-right:1px solid #e6e6e6;font:11px/19px "Liberation Mono",monospace;color:#333;flex:none}
.row b+b{width:75px;border-right:0}
.row b.mut{color:#999}
.row b.dk{color:#555}
.strip{width:12px;background:#ececec;border-left:1px solid #666;border-right:2px solid #666;flex:none}
.view{flex:1;position:relative;background:linear-gradient(#b2b2b4,#d8d8da 67%,#e7e7e9)}
.model{position:absolute;left:0;top:0;display:block}
.ax{font:11px "Liberation Sans",sans-serif}
.green{fill:#3a9a3a}.white{fill:#f0f0f0}.orange{fill:#e89030}.gray{fill:#b8b0a0}
.mark{position:absolute;right:3px;bottom:3px;margin:0;font:14px/18px "Liberation Mono","Noto Sans CJK SC",monospace;color:#666;white-space:nowrap;letter-spacing:.3px;text-shadow:0 0 1px #fff}

/* menus */
.menu{position:absolute;background:#ebebeb;border:1px solid #8c8c8c;box-shadow:3px 3px 2px rgba(50,50,50,.6);color:#111}
.m1{left:11px;top:15px;width:186px;padding:2px 1px 1px;z-index:3}
.m2{left:194px;top:62px;width:155px;padding:2px 2px 2px;z-index:4}
.mi{height:22px;display:flex;align-items:center;white-space:nowrap;position:relative}
.mic{width:27px;height:22px;display:flex;align-items:center;justify-content:center;flex:none}
.m1 .mic svg{margin-left:-2px}
.mi.hot{background:#5b9aff;color:#fff}
.mi.off{color:#9b9b9b}
.mic.boxed{background:#7ab0ff;border:1px solid #1c5fc4}
.tri{margin-left:auto;margin-right:4px;border:4px solid transparent;border-left:5px solid #111;border-right:0}
.mi.hot .tri{border-left-color:#fff}
.key{margin-left:auto;margin-right:13px;font:12px/1 "Liberation Mono",monospace}
.sep{height:9px;position:relative}
.sep::after{content:"";position:absolute;left:11px;right:11px;top:3px;height:1px;background:#bdbdbd}

.tip{position:absolute;left:347px;top:229px;width:194px;height:29px;background:#f4f4f4;border:1px solid #d8d8d8;border-radius:5px;padding-left:6px;line-height:27px;white-space:nowrap;box-shadow:3px 3px 2px rgba(50,50,50,.6);z-index:5}

/* dialog */
.dlg{position:absolute;left:642px;top:179px;width:290px;display:flex;flex-direction:column;z-index:2}
.dlg-title{height:23px;background:linear-gradient(#333 0,#1a1a1a 35%,#000);border-radius:5px 5px 0 0;display:flex;align-items:center;gap:4px;padding:0 3px 0 9px}
.dlg-name{color:#fff;flex:1}
.tbtn{width:18px;height:18px;border-radius:3px;background:linear-gradient(#777,#333);display:flex;align-items:center;justify-content:center;border:1px solid #555}
.tbtn.close{background:linear-gradient(#f07060,#d03020);border-color:#a03020}
.dlg-body{background:linear-gradient(#ececec,#e6e6e6);border-left:1px solid #888;border-right:1px solid #888;padding:5px 6px 0;height:300px}
.sec{height:22px;display:flex;align-items:center;justify-content:space-between;background:linear-gradient(#fafafa,#f0f0f0 45%,#cfcfcf);border-bottom:1px solid #8a8a8a}
.sec.gap{margin-top:1px}
.sec h3{margin:0;padding-left:6px;font-size:12px;font-weight:700;color:#111}
.col{width:22px;height:100%;border-left:1px solid #aaa;display:flex;align-items:center;justify-content:center}
.chev{width:14px;height:10px;display:block}
.cn{background:#d0d0d0;display:flex;align-items:center}
.c1{height:48px;padding:0 9px 3px 8px}
.pill{flex:1;height:31px;border-radius:6px;background:linear-gradient(90deg,#e0a262,#dcc0a0 60%,#d2cfcc 90%,#d0d0d0);display:flex;align-items:center;padding-left:8px;min-width:0}
.pill.plain{background:none;padding-left:9px}
.pill em{color:#d81010;font:bold 18px/14px "Liberation Sans",sans-serif;width:12px;flex:none;height:14px;font-style:normal}
.sqb{width:22px;height:24px;margin:0 5px;background:linear-gradient(#f2f2f2,#cfcfcf);border:1px solid #777;border-radius:4px;display:flex;align-items:center;justify-content:center;flex:none}
.orb{width:47px;height:30px;display:flex;border:1px solid #eee;border-radius:4px;overflow:hidden;flex:none;box-shadow:0 0 0 1px #999;background:linear-gradient(#ffc89a,#ff9a50 48%,#ff7010 52%,#ffb070)}
.orm{width:31px;display:flex;align-items:center;justify-content:center;border-right:1px solid #a05018}
.ord{flex:1;display:flex;align-items:center;justify-content:center}
.ord i{border:4px solid transparent;border-top:5px solid #111;border-bottom:0}
.c2{height:33px;padding:0 9px 2px 7px;justify-content:space-between}
.lab{color:#111}
.spin{width:56px;height:16px;background:#fff;border:1px solid #777;border-radius:3px;display:flex;overflow:hidden}
.val{flex:1;text-align:right;padding-right:7px;font:11px/14px "Liberation Mono",monospace}
.sb{width:17px;background:linear-gradient(#d8e8fb,#5a9cf0);display:flex;flex-direction:column;align-items:center;justify-content:center;gap:2px}
.up{border:4px solid transparent;border-bottom:4px solid #111;border-top:0}
.dn{border:4px solid transparent;border-top:4px solid #111;border-bottom:0}
.c3{height:114px;flex-direction:column;align-items:stretch;padding:8px 9px 0 7px;gap:4px}
.line{height:18px;display:flex;align-items:center}
.line.pt{height:30px}
.line .lab{flex:1}
.cb{width:16px;height:16px;border:1px solid #777;border-radius:3px;background:linear-gradient(#eee,#cfcfcf);margin-left:1px;flex:none}
.lk{width:14px;height:16px;margin-left:6px;flex:none}
.lab2{margin-left:6px;flex:1}
.fld{width:106px;height:18px;background:#fff;border:1px solid #777;border-radius:3px;display:flex;overflow:hidden;flex:none}
.dd{flex:1;padding-left:3px;line-height:16px}
.inp{width:53px;padding-left:2px;font:12px/15px "Liberation Sans",sans-serif}
.unit{flex:1;background:#d4d4d4;font:11px/17px "Liberation Mono",monospace;padding-left:3px}
.bb{width:17px;background:linear-gradient(#d8e8fb,#4a90ee);display:flex;align-items:center;justify-content:center;flex:none}
.cv{width:13px;height:8px;background:#123;clip-path:polygon(0 0,100% 0,50% 100%)}
.da{width:11px;height:12px;background:#111;clip-path:polygon(30% 0,70% 0,70% 45%,100% 45%,50% 100%,0 45%,30% 45%)}
.foot{height:32px;margin-top:3px;border-top:1px solid #f8f8f8;display:flex;justify-content:flex-end;align-items:flex-start;padding:6px 10px 0 0}
.closebtn{width:52px;height:18px;padding:0;background:linear-gradient(#f6f6f6,#c8c8c8);border:1px solid #777;border-radius:3px;font:12px/16px "Noto Sans CJK SC",sans-serif;color:#111}
.dlg-end{height:10px;background:linear-gradient(#000,#222 40%,#111);border-radius:0 0 5px 5px;border-top:1px solid #555}
```
